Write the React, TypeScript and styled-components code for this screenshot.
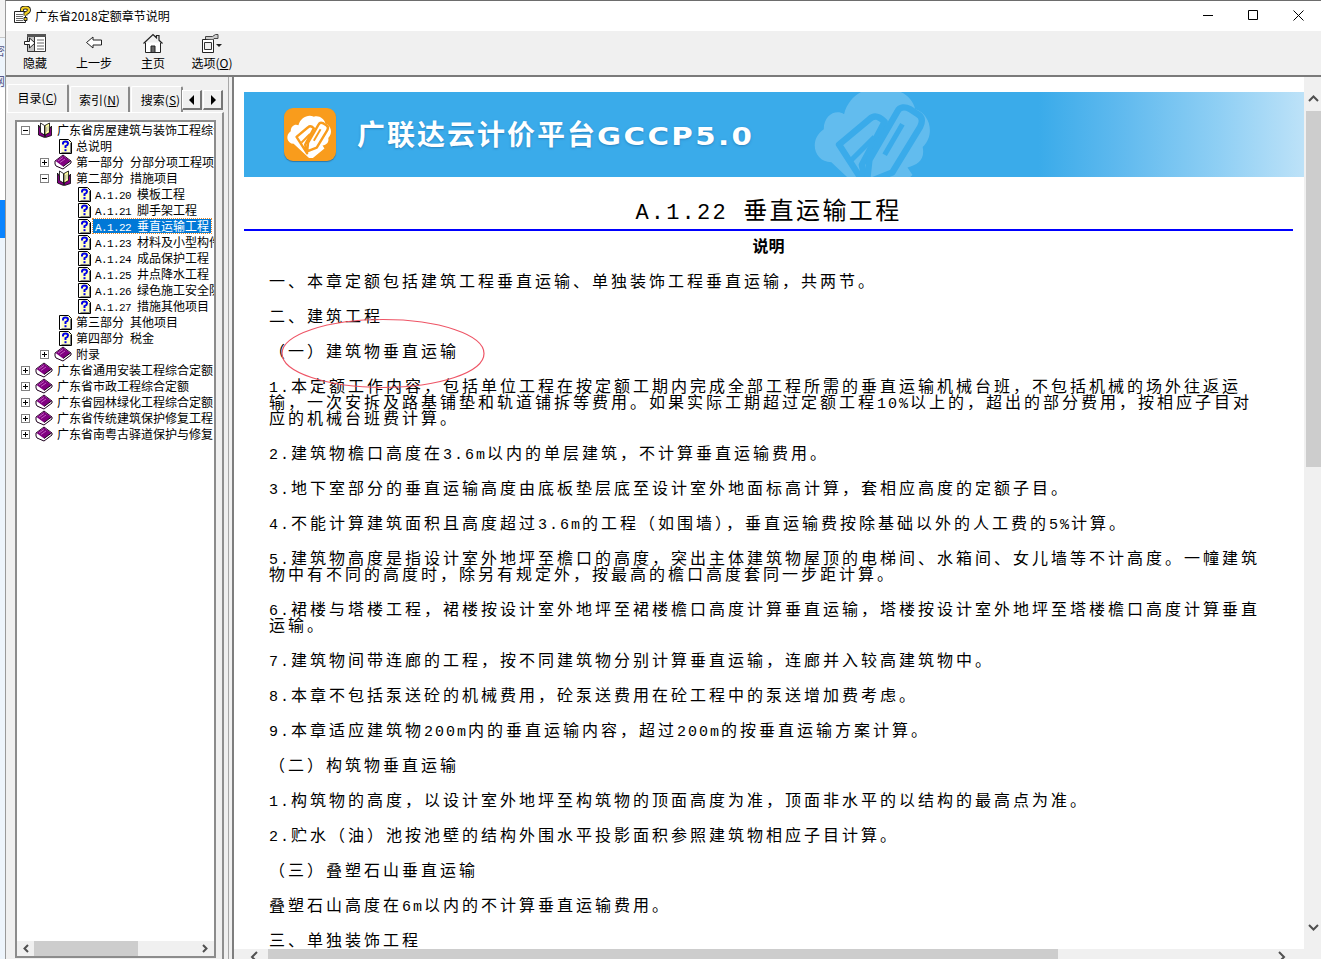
import React from 'react';
import styled, { createGlobalStyle } from 'styled-components';

const GlobalStyle = createGlobalStyle`
  html, body {
    margin: 0;
    padding: 0;
    height: 100%;
    overflow: hidden;
    background: #eef5fc;
  }
  #root {
    height: 100%;
  }
`;

const cjk = '"Noto Sans CJK SC", "Liberation Sans", sans-serif';

const Desktop = styled.div`
  display: flex;
  height: 959px;
  width: 1321px;
  overflow: hidden;
  font-family: ${cjk};
  color: #000;
`;

const DesktopEdge = styled.div`
  width: 5px;
  flex: none;
  display: flex;
  flex-direction: column;
  background: #eef5fc;
  overflow: hidden;
`;

const EdgeBlock = styled.div<{ $h: number; $color?: string }>`
  height: ${(p) => p.$h}px;
  flex: none;
  background: ${(p) => p.$color || 'transparent'};
  border-bottom: ${(p) => (p.$color === '#f3f3f3' ? '1px solid #c8c8c8' : 'none')};
  box-sizing: border-box;
  font-size: 12px;
  line-height: 14px;
  color: #5a5a8a;
  direction: rtl;
  white-space: nowrap;
  display: flex;
  align-items: flex-end;
`;

const Win = styled.div`
  flex: 1;
  min-width: 0;
  display: flex;
  flex-direction: column;
  background: #f0f0f0;
  border-top: 1px solid #6d6d6d;
  border-left: 1px solid #9a9a9a;
`;

const TitleBar = styled.div`
  height: 30px;
  box-sizing: border-box;
  flex: none;
  display: flex;
  align-items: center;
  background: #fff;
  padding: 0 0 2px 8px;
`;

const TitleText = styled.div`
  font-size: 12px;
  margin-left: 3px;
  flex: 1;
`;

const WinBtn = styled.div`
  width: 45px;
  height: 28px;
  display: flex;
  align-items: center;
  justify-content: center;
`;

const Toolbar = styled.div`
  height: 44px;
  flex: none;
  display: flex;
  align-items: flex-start;
  background: #f0f0f0;
  border-bottom: 2px solid #7a7a7a;
`;

const ToolBtn = styled.div<{ $w: number }>`
  width: ${(p) => p.$w}px;
  flex: none;
  display: flex;
  flex-direction: column;
  align-items: center;
  font-size: 12px;
  line-height: 14px;
  padding-top: 2px;
  svg {
    display: block;
    margin-bottom: 3px;
  }
`;

const Accel = styled.span`
  text-decoration: underline;
`;

const Main = styled.div`
  flex: 1;
  min-height: 0;
  display: flex;
`;

const Side = styled.div`
  width: 218px;
  flex: none;
  display: flex;
  flex-direction: column;
  padding: 7px 0 0 1px;
  box-sizing: border-box;
  background: #f0f0f0;
  overflow: hidden;
`;

const Tabs = styled.div`
  display: flex;
  align-items: flex-end;
  height: 28px;
  flex: none;
  position: relative;
`;

const Tab = styled.div<{ $w: number; $active?: boolean; $inset?: number }>`
  width: ${(p) => p.$w}px;
  height: ${(p) => (p.$active ? 28 : 26)}px;
  box-sizing: border-box;
  flex: none;
  font-size: 12px;
  text-align: center;
  white-space: nowrap;
  line-height: 26px;
  padding-left: ${(p) => p.$inset || 0}px;
  background: #f0f0f0;
  border-top: 1px solid #fff;
  border-left: 1px solid #fff;
  border-right: 2px solid #8a8a8a;
  border-radius: 2px 2px 0 0;
  margin-right: 1px;
`;

const TabArrow = styled.div<{ $left: number }>`
  position: absolute;
  top: 6px;
  left: ${(p) => p.$left}px;
  width: 20px;
  height: 20px;
  box-sizing: border-box;
  background: #f0f0f0;
  border-top: 1px solid #fff;
  border-left: 1px solid #fff;
  border-right: 2px solid #777;
  border-bottom: 2px solid #777;
  display: flex;
  align-items: center;
  justify-content: center;
`;

const TabBody = styled.div`
  flex: 1;
  min-height: 0;
  padding: 7px 0 0 8px;
  border-top: 1px solid #fff;
  border-right: 2px solid #8f8f8f;
`;

const TreeBox = styled.div`
  width: 201px;
  height: 838px;
  box-sizing: border-box;
  border: 2px solid #8c8c8c;
  background: #fff;
  display: flex;
  flex-direction: column;
`;

const TreeList = styled.div`
  flex: 1;
  min-height: 0;
  overflow: hidden;
`;

const TreeRow = styled.div<{ $depth: number }>`
  height: 16px;
  display: flex;
  align-items: center;
  white-space: nowrap;
  overflow: hidden;
  font-size: 12px;
  padding-left: ${(p) => 4 + p.$depth * 19}px;
`;

const Toggle = styled.div<{ $empty?: boolean }>`
  width: 9px;
  height: 9px;
  flex: none;
  box-sizing: border-box;
  margin-right: 7px;
  border: 1px solid ${(p) => (p.$empty ? 'transparent' : '#808080')};
  display: flex;
  align-items: center;
  justify-content: center;
`;

const IconSlot = styled.div`
  width: 16px;
  height: 16px;
  flex: none;
  display: flex;
  align-items: center;
  justify-content: flex-end;
`;

const Label = styled.span<{ $selected?: boolean }>`
  margin-left: 2px;
  padding: 0 2px;
  height: 14px;
  line-height: 14px;
  background: ${(p) => (p.$selected ? '#0078d7' : 'transparent')};
  color: ${(p) => (p.$selected ? '#fff' : '#000')};
  outline: ${(p) => (p.$selected ? '1px dotted #e88a2b' : 'none')};
`;

const TreeLatin = styled.span`
  font-family: "Liberation Mono", monospace;
  font-size: 11px;
  letter-spacing: -0.6px;
  line-height: 0;
  white-space: pre;
`;

const HBar = styled.div`
  height: 15px;
  flex: none;
  background: #f0f0f0;
  display: flex;
  align-items: center;
  justify-content: space-between;
  padding: 0 6px;
  position: relative;
`;

const HThumb = styled.div`
  position: absolute;
  left: 17px;
  top: 0;
  height: 15px;
  width: 104px;
  background: #cdcdcd;
`;

const Splitter = styled.div`
  width: 10px;
  flex: none;
  box-sizing: border-box;
  background: #f0f0f0;
  border-right: 2px solid #7e7e7e;
  position: relative;
  &::before {
    content: '';
    position: absolute;
    left: 4px;
    top: 0;
    bottom: 0;
    width: 1px;
    background: #a8a8a8;
  }
`;

const Viewer = styled.div`
  flex: 1;
  min-width: 0;
  display: grid;
  grid-template-columns: 1fr 17px;
  grid-template-rows: 1fr 10px;
  height: 882px;
  background: #f0f0f0;
`;

const Page = styled.div`
  background: #fff;
  overflow: hidden;
  padding: 15px 0 0 10px;
  min-height: 0;
  position: relative;
`;

const Banner = styled.div`
  width: 1060px;
  height: 85px;
  display: flex;
  align-items: center;
  position: relative;
  overflow: hidden;
  padding-left: 40px;
  box-sizing: border-box;
  background: linear-gradient(90deg, #3aabea 0%, #3aabea 75%, #5cb8ee 82%, #8fcff4 92%, #bde2f8 100%);
`;

const BannerTitle = styled.div`
  margin-left: 21px;
  color: #fff;
  font-weight: 700;
  font-size: 28px;
  letter-spacing: 2px;
  line-height: 34px;
  white-space: nowrap;
  text-shadow: 0 1px 2px rgba(20, 90, 150, 0.5);
`;

const BannerLatin = styled.span`
  display: inline-block;
  font-family: "DejaVu Sans", sans-serif;
  font-size: 24px;
  letter-spacing: 2px;
  transform: scaleX(1.22);
  transform-origin: left center;
`;

const Watermark = styled.div`
  position: absolute;
  left: 562px;
  top: -21px;
  opacity: 0.2;
`;

const Heading = styled.h1`
  margin: 19px 0 0;
  width: 1049px;
  box-sizing: border-box;
  height: 35px;
  font-size: 24px;
  line-height: 26px;
  font-weight: 400;
  text-align: center;
  letter-spacing: 2.4px;
  white-space: nowrap;
  border-bottom: 2px solid #0000ff;
`;

const HeadingLatin = styled.span`
  font-family: "Liberation Mono", monospace;
  font-size: 22px;
  letter-spacing: 2.2px;
  line-height: 0;
`;

const SubHeading = styled.div`
  width: 1049px;
  text-align: center;
  font-size: 16px;
  font-weight: 700;
  line-height: 16px;
  margin-top: 6px;
`;

const Body = styled.div`
  padding-left: 25px;
  margin-top: 19px;
  font-size: 16px;
  line-height: 16px;
  letter-spacing: 3px;
`;

const Para = styled.p`
  margin: 0 0 19px;
  white-space: nowrap;
`;

const BodyLatin = styled.span`
  font-family: "Liberation Mono", monospace;
  font-size: 15px;
  letter-spacing: 2px;
  line-height: 0;
`;

const Ellipse = styled.svg`
  position: absolute;
  left: 48px;
  top: 242px;
  overflow: visible;
`;

const VBar = styled.div`
  background: #f0f0f0;
  position: relative;
  padding-top: 34px;
`;

const VThumb = styled.div`
  height: 356px;
  margin-left: 2px;
  width: 15px;
  background: #cdcdcd;
`;

const ArrowSlot = styled.div<{ $top: number }>`
  position: absolute;
  left: 2px;
  top: ${(p) => p.$top}px;
  width: 15px;
  height: 12px;
  display: flex;
  align-items: center;
  justify-content: center;
`;

const BottomBar = styled.div`
  background: #f0f0f0;
  position: relative;
  overflow: hidden;
`;

const BottomThumb = styled.div`
  position: absolute;
  left: 34px;
  top: 0;
  bottom: 0;
  width: 790px;
  background: #cdcdcd;
`;

const BottomArrow = styled.svg<{ $left: number }>`
  position: absolute;
  left: ${(p) => p.$left}px;
  top: 2px;
`;

const Corner = styled.div`
  background: #f0f0f0;
`;

/* --- 16-colour style icons from the help viewer --- */

const TopicIcon = () => (
  <svg width="13" height="15" viewBox="0 0 13 15">
    <path d="M.5.500h9l3 3v11H.5z" fill="#ffffc4" stroke="#000" />
    <path d="M1 1h1.500v13H1z" fill="#fff" />
    <path d="M11 4h1v10h-1zM2.500 13H12v1H2.500z" fill="#808080" />
    <path d="M4 5.500V4.500Q4 2.500 6.500 2.500T9 4.500Q9 6 6.500 7.200V9" fill="none" stroke="#0000e8" strokeWidth="2" />
    <path d="M5.500 10.200h2v2h-2z" fill="#0000e8" />
  </svg>
);

const ClosedBook = () => (
  <svg width="18" height="16" viewBox="0 0 18 16" style={{ flex: 'none' }}>
    <path d="M1 7 9 1l8 6v2l-8 6-7-3-1-2z" fill="#fff" stroke="#1c001c" strokeWidth="1" />
    <path d="M1.500 7 9 1.500l7.500 5.500L9 12.500z" fill="#800080" />
    <path d="M4 7l5-3.500M6 8.500l5-3.500" stroke="#c060c0" strokeWidth="1" />
    <path d="M9 12.500l7.500-5.500" stroke="#1c001c" strokeWidth="1" />
  </svg>
);

const OpenBook = () => (
  <svg width="16" height="16" viewBox="0 0 16 16" style={{ flex: 'none' }}>
    <path d="M1.500 3v10l6 2.500V13z" fill="#800080" stroke="#000" strokeWidth="0.8" />
    <path d="M14.500 4v9.500l-6 2V13z" fill="#800080" stroke="#000" strokeWidth="0.8" />
    <path d="M3.500 1l4 2.500v9.500l-4-2.500z" fill="#fff" stroke="#000" strokeWidth="0.8" />
    <path d="M8 3.500 12.500 1v9.500L8 13z" fill="#ffffa0" stroke="#000" strokeWidth="0.8" />
    <path d="M9.500 5v5M11 4v5" stroke="#b0b0b0" strokeWidth="0.8" />
  </svg>
);

const Plus = ({ open }: { open?: boolean }) => (
  <svg width="7" height="7" viewBox="0 0 7 7">
    <path d="M1 3.500h5" stroke="#000" />
    {!open && <path d="M3.500 1v5" stroke="#000" />}
  </svg>
);

const HelpLogo = () => (
  <svg width="18" height="18" viewBox="0 0 18 18" style={{ flex: 'none' }}>
    <path d="M.5 5.500h11v11H.5z" fill="#fff" stroke="#222" />
    <path d="M2 8.500h7M2 10.500h7M2 12.500h7M2 14.500h7" stroke="#666" />
    <path d="M8 5V3.500Q8 1.500 11.500 1.500T15 4Q15 6 11.500 7.500V9.500" fill="none" stroke="#222" strokeWidth="4" />
    <path d="M8 5V3.500Q8 1.500 11.500 1.500T15 4Q15 6 11.500 7.500V9.500" fill="none" stroke="#f5d020" strokeWidth="2.200" />
    <path d="M10 11.500h3v3h-3z" fill="#f5d020" stroke="#222" />
  </svg>
);

const HideIcon = () => (
  <svg width="22" height="20" viewBox="0 0 22 20">
    <path d="M3.500 1.500h18v17h-18z" fill="#fff" stroke="#333" />
    <path d="M3 1h19v3H3z" fill="#555" />
    <path d="M4 4h6v14H4z" fill="#c4c4c4" />
    <path d="M10.500 4v14" stroke="#333" />
    <path d="M13 7h7M13 10h7M13 13h7M13 16h7" stroke="#666" />
    <path d="M.5 8.500h5V5l5.500 5-5.500 5v-3.500h-5z" fill="#fff" stroke="#222" />
  </svg>
);

const BackIcon = () => (
  <svg width="18" height="20" viewBox="0 0 18 20">
    <path d="M1.500 9.500 8 4v3h8.500v5H8v3z" fill="#fff" stroke="#222" />
  </svg>
);

const HomeIcon = () => (
  <svg width="22" height="20" viewBox="0 0 22 20">
    <path d="M1.500 10.500 11 1.500l3.500 3.300V2.500h2.500v4.700l3.500 3.300" fill="none" stroke="#222" strokeWidth="1.200" />
    <path d="M3.500 9.500v10h15v-10" fill="#fff" stroke="#222" />
    <path d="M9 13h4v6.500H9z" fill="#666" stroke="#222" />
  </svg>
);

const OptionsIcon = () => (
  <svg width="22" height="20" viewBox="0 0 22 20">
    <path d="M1.500 6.500h11v13h-11z" fill="#fff" stroke="#222" />
    <path d="M3.500 9.500h7v7h-7z" fill="#eee" stroke="#333" />
    <path d="M4.500 6V3.500h7l3-2h2.500v4h-4l-1 1" fill="#ccc" stroke="#444" />
    <path d="M15 11h6l-3 3z" fill="#222" />
  </svg>
);

const CloudPen = ({ cloud, tile, line, size }: { cloud: string; tile: string; line: string; size: number }) => (
  <svg width={size} height={size} viewBox="0 0 54 54">
    <path d="M10 36c-7 0-9-9-3-13 0-6 5-8 8-6 2-8 10-12 16-9 5-2 11 2 12 7 6 2 8 10 3 15 1 5-2 7-6 8l2 3-12 10H26z" fill={cloud} />
    <path d="M13 29 25 19c2-2 4-1 6 1l-9 17 2 9z" fill={tile} stroke={line} strokeWidth="2.500" strokeLinejoin="round" />
    <path d="M24 44l1-9 11-19c1-2 3-2 5-1l3 2c2 1 2 3 1 5L34 40z" fill={tile} stroke={line} strokeWidth="2.500" strokeLinejoin="round" />
    <path d="M31 33l7-12" stroke={line} strokeWidth="2" />
    <path d="M18 35l9-9" stroke={line} strokeWidth="2" />
  </svg>
);

const LogoTile = styled.div`
  width: 52px;
  height: 53px;
  flex: none;
  border-radius: 9px;
  background: #f99c1c;
  box-shadow: 0 1px 1px rgba(30, 70, 110, 0.5);
  display: flex;
  align-items: center;
  justify-content: center;
  overflow: hidden;
`;

const Chevron = ({ d, w = 9, h = 7 }: { d: string; w?: number; h?: number }) => (
  <svg width={w} height={h} viewBox={`0 0 ${w} ${h}`}>
    <path d={d} fill="none" stroke="#505050" strokeWidth="2" />
  </svg>
);

/* ---- data ---- */

type Kind = 'topic' | 'open' | 'closed';
const tree: { depth: number; kind: Kind; text: string; toggle?: 'plus' | 'minus'; selected?: boolean }[] = [
  { depth: 0, kind: 'open', toggle: 'minus', text: '广东省房屋建筑与装饰工程综合定额' },
  { depth: 1, kind: 'topic', text: '总说明' },
  { depth: 1, kind: 'closed', toggle: 'plus', text: '第一部分 分部分项工程项目' },
  { depth: 1, kind: 'open', toggle: 'minus', text: '第二部分 措施项目' },
  { depth: 2, kind: 'topic', text: 'A.1.20 模板工程' },
  { depth: 2, kind: 'topic', text: 'A.1.21 脚手架工程' },
  { depth: 2, kind: 'topic', text: 'A.1.22 垂直运输工程', selected: true },
  { depth: 2, kind: 'topic', text: 'A.1.23 材料及小型构件' },
  { depth: 2, kind: 'topic', text: 'A.1.24 成品保护工程' },
  { depth: 2, kind: 'topic', text: 'A.1.25 井点降水工程' },
  { depth: 2, kind: 'topic', text: 'A.1.26 绿色施工安全防护' },
  { depth: 2, kind: 'topic', text: 'A.1.27 措施其他项目' },
  { depth: 1, kind: 'topic', text: '第三部分 其他项目' },
  { depth: 1, kind: 'topic', text: '第四部分 税金' },
  { depth: 1, kind: 'closed', toggle: 'plus', text: '附录' },
  { depth: 0, kind: 'closed', toggle: 'plus', text: '广东省通用安装工程综合定额' },
  { depth: 0, kind: 'closed', toggle: 'plus', text: '广东省市政工程综合定额' },
  { depth: 0, kind: 'closed', toggle: 'plus', text: '广东省园林绿化工程综合定额' },
  { depth: 0, kind: 'closed', toggle: 'plus', text: '广东省传统建筑保护修复工程' },
  { depth: 0, kind: 'closed', toggle: 'plus', text: '广东省南粤古驿道保护与修复' },
];

const paragraphs: string[][] = [
  ['一、本章定额包括建筑工程垂直运输、单独装饰工程垂直运输，共两节。'],
  ['二、建筑工程'],
  ['（一）建筑物垂直运输'],
  [
    '1.本定额工作内容，包括单位工程在按定额工期内完成全部工程所需的垂直运输机械台班，不包括机械的场外往返运',
    '输，一次安拆及路基铺垫和轨道铺拆等费用。如果实际工期超过定额工程10%以上的，超出的部分费用，按相应子目对',
    '应的机械台班费计算。',
  ],
  ['2.建筑物檐口高度在3.6m以内的单层建筑，不计算垂直运输费用。'],
  ['3.地下室部分的垂直运输高度由底板垫层底至设计室外地面标高计算，套相应高度的定额子目。'],
  ['4.不能计算建筑面积且高度超过3.6m的工程（如围墙），垂直运输费按除基础以外的人工费的5%计算。'],
  [
    '5.建筑物高度是指设计室外地坪至檐口的高度，突出主体建筑物屋顶的电梯间、水箱间、女儿墙等不计高度。一幢建筑',
    '物中有不同的高度时，除另有规定外，按最高的檐口高度套同一步距计算。',
  ],
  [
    '6.裙楼与塔楼工程，裙楼按设计室外地坪至裙楼檐口高度计算垂直运输，塔楼按设计室外地坪至塔楼檐口高度计算垂直',
    '运输。',
  ],
  ['7.建筑物间带连廊的工程，按不同建筑物分别计算垂直运输，连廊并入较高建筑物中。'],
  ['8.本章不包括泵送砼的机械费用，砼泵送费用在砼工程中的泵送增加费考虑。'],
  ['9.本章适应建筑物200m内的垂直运输内容，超过200m的按垂直运输方案计算。'],
  ['（二）构筑物垂直运输'],
  ['1.构筑物的高度，以设计室外地坪至构筑物的顶面高度为准，顶面非水平的以结构的最高点为准。'],
  ['2.贮水（油）池按池壁的结构外围水平投影面积参照建筑物相应子目计算。'],
  ['（三）叠塑石山垂直运输'],
  ['叠塑石山高度在6m以内的不计算垂直运输费用。'],
  ['三、单独装饰工程'],
];

const Line = ({ text }: { text: string }) => (
  <>
    {text.split(/([0-9A-Za-z.%]+)/).filter(Boolean).map((part, i) =>
      /^[0-9A-Za-z.%]+$/.test(part) ? <BodyLatin key={i}>{part}</BodyLatin> : <span key={i}>{part}</span>,
    )}
  </>
);

const TreeText = ({ text }: { text: string }) => (
  <>
    {text.split(/([0-9A-Za-z. ]+)/).filter(Boolean).map((part, i) =>
      /^[0-9A-Za-z. ]+$/.test(part) ? <TreeLatin key={i}>{part}</TreeLatin> : <span key={i}>{part}</span>,
    )}
  </>
);

export default function App() {
  return (
    <Desktop>
      <GlobalStyle />
      <DesktopEdge>
        <EdgeBlock $h={38} $color="#f3f3f3" />
        <EdgeBlock $h={20}>密</EdgeBlock>
        <EdgeBlock $h={30}>网</EdgeBlock>
        <EdgeBlock $h={112} $color="#ffffff" />
        <EdgeBlock $h={38} $color="#0a84ff" />
      </DesktopEdge>
      <Win>
        <TitleBar>
          <HelpLogo />
          <TitleText>广东省2018定额章节说明</TitleText>
          <WinBtn>
            <svg width="11" height="11" viewBox="0 0 11 11"><path d="M0 5.500h10" stroke="#000" /></svg>
          </WinBtn>
          <WinBtn>
            <svg width="11" height="11" viewBox="0 0 11 11"><path d="M.5.500h9v9h-9z" fill="none" stroke="#000" /></svg>
          </WinBtn>
          <WinBtn>
            <svg width="11" height="11" viewBox="0 0 11 11"><path d="M.5.500l10 10M10.500.500l-10 10" stroke="#000" /></svg>
          </WinBtn>
        </TitleBar>
        <Toolbar>
          <ToolBtn $w={58}><HideIcon />隐藏</ToolBtn>
          <ToolBtn $w={60}><BackIcon />上一步</ToolBtn>
          <ToolBtn $w={58}><HomeIcon />主页</ToolBtn>
          <ToolBtn $w={60}><OptionsIcon /><span>选项(<Accel>O</Accel>)</span></ToolBtn>
        </Toolbar>
        <Main>
          <Side>
            <Tabs>
              <Tab $w={62} $active>目录(<Accel>C</Accel>)</Tab>
              <Tab $w={60}>索引(<Accel>N</Accel>)</Tab>
              <Tab $w={52} $inset={8}>搜索(<Accel>S</Accel>)</Tab>
              <TabArrow $left={175}>
                <svg width="6" height="10" viewBox="0 0 6 10"><path d="M5 0v10L0 5z" /></svg>
              </TabArrow>
              <TabArrow $left={196}>
                <svg width="6" height="10" viewBox="0 0 6 10"><path d="M1 0v10l5-5z" /></svg>
              </TabArrow>
            </Tabs>
            <TabBody>
              <TreeBox>
                <TreeList>
                  {tree.map((row) => (
                    <TreeRow key={row.text} $depth={row.depth}>
                      <Toggle $empty={!row.toggle}>
                        {row.toggle && <Plus open={row.toggle === 'minus'} />}
                      </Toggle>
                      <IconSlot>
                        {row.kind === 'topic' && <TopicIcon />}
                        {row.kind === 'open' && <OpenBook />}
                        {row.kind === 'closed' && <ClosedBook />}
                      </IconSlot>
                      <Label $selected={row.selected}>
                        <TreeText text={row.text} />
                      </Label>
                    </TreeRow>
                  ))}
                </TreeList>
                <HBar>
                  <HThumb />
                  <Chevron w={6} h={9} d="M5 1 1.500 4.500 5 8" />
                  <Chevron w={6} h={9} d="M1 1l3.500 3.500L1 8" />
                </HBar>
              </TreeBox>
            </TabBody>
          </Side>
          <Splitter />
          <Viewer>
            <Page>
              <Banner>
                <LogoTile>
                  <CloudPen size={54} cloud="#fff" tile="#fff" line="#f99c1c" />
                </LogoTile>
                <BannerTitle>
                  广联达云计价平台<BannerLatin>GCCP5.0</BannerLatin>
                </BannerTitle>
                <Watermark>
                  <CloudPen size={137} cloud="#fff" tile="#fff" line="#3aabea" />
                </Watermark>
              </Banner>
              <Heading>
                <HeadingLatin>A.1.22 </HeadingLatin>垂直运输工程
              </Heading>
              <SubHeading>说明</SubHeading>
              <Body>
                {paragraphs.map((lines, i) => (
                  <Para key={i}>
                    {lines.map((l, j) => (
                      <React.Fragment key={j}>
                        {j > 0 && <br />}
                        <Line text={l} />
                      </React.Fragment>
                    ))}
                  </Para>
                ))}
              </Body>
              <Ellipse width="202" height="69" viewBox="0 0 202 69">
                <ellipse cx="101" cy="34.500" rx="101" ry="34" fill="none" stroke="#ee5566" strokeWidth="1.200" />
              </Ellipse>
            </Page>
            <VBar>
              <ArrowSlot $top={15}><Chevron w={11} h={7} d="M1 6l4.500-4.500L10 6" /></ArrowSlot>
              <VThumb />
              <ArrowSlot $top={844}><Chevron w={11} h={7} d="M1 1l4.500 4.500L10 1" /></ArrowSlot>
            </VBar>
            <BottomBar>
              <BottomThumb />
              <BottomArrow $left={16} width="8" height="12" viewBox="0 0 8 12"><path d="M7 1 2 6l5 5" fill="none" stroke="#505050" strokeWidth="2" /></BottomArrow>
              <BottomArrow $left={1044} width="8" height="12" viewBox="0 0 8 12"><path d="M1 1l5 5-5 5" fill="none" stroke="#505050" strokeWidth="2" /></BottomArrow>
            </BottomBar>
            <Corner />
          </Viewer>
        </Main>
      </Win>
    </Desktop>
  );
}
